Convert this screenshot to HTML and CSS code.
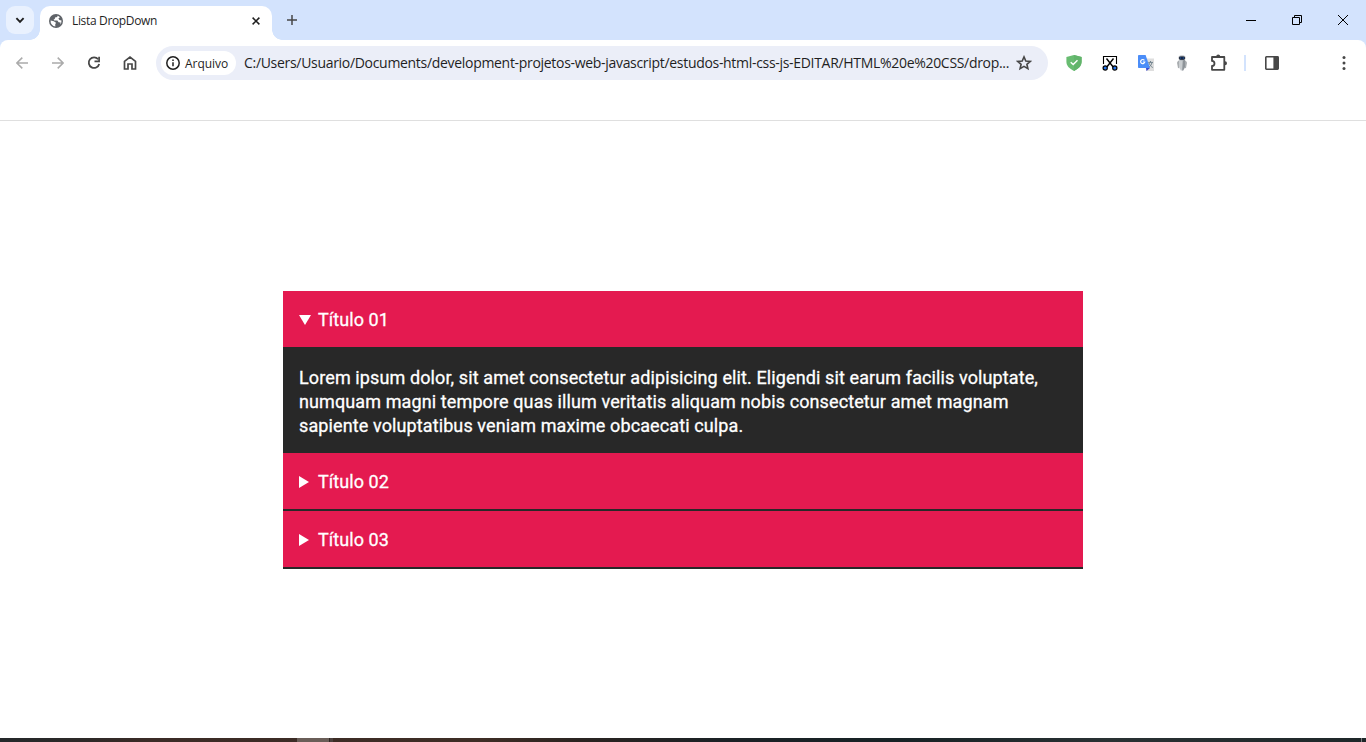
FILE: index.html
```html
<!DOCTYPE html>
<html lang="pt-BR">
<head>
<meta charset="utf-8">
<title>Lista DropDown</title>
<link rel="stylesheet" href="styles.css">
</head>
<body>
<div class="browser">
  <header class="tabstrip">
    <div class="tab-search"><svg width="10" height="10" viewBox="0 0 10 10"><path d="M1.4 3.2 5 6.8 8.6 3.2" fill="none" stroke="#1f1f1f" stroke-width="1.9"/></svg></div>
    <div class="tab">
      <svg class="globe" width="14" height="14" viewBox="0 0 14 14"><circle cx="7" cy="7" r="7" fill="#5f6368"/><path d="M1.6 6.4 4.8 7.2 7 8.8 6.2 10.4 6.4 12.4A5.5 5.5 0 0 1 1.6 6.4ZM8.4 1.7 8.3 3 6 3.6 5.8 5 4.6 5.6 5.2 6.4 8.4 6.5 9.6 8.3 11.6 8.5 11.1 10.6A5.5 5.5 0 0 0 12.5 6.5L10.4 6.1 9.4 4.5 10.9 3.2A5.5 5.5 0 0 0 8.4 1.7Z" fill="#fff"/></svg>
      <span class="tab-title">Lista DropDown</span>
      <svg class="tab-close" width="8" height="8" viewBox="0 0 8 8"><path d="M.6.6 7.4 7.4M7.4.6.6 7.4" stroke="#1f1f1f" stroke-width="1.5"/></svg>
    </div>
    <svg class="new-tab" width="10" height="10" viewBox="0 0 10 10"><path d="M5 0V10M0 5H10" stroke="#474747" stroke-width="1.5"/></svg>
    <div class="window-controls">
      <span><svg width="10" height="10" viewBox="0 0 10 10"><path d="M0 5.5H10" stroke="#000"/></svg></span>
      <span><svg width="10" height="10" viewBox="0 0 10 10"><path d="M.5 2.5H7.5V9.5H.5ZM2.5 2.5V.5H9.5V7.5H7.5" fill="none" stroke="#000"/></svg></span>
      <span><svg width="10" height="10" viewBox="0 0 10 10"><path d="M0 0 10 10M10 0 0 10" stroke="#000"/></svg></span>
    </div>
  </header>
  <div class="toolbar-bg">
  <nav class="toolbar">
    <span class="tool"><svg width="12" height="12" viewBox="0 0 12 12"><path d="M12 6H1M6.3.6.9 6 6.3 11.4" fill="none" stroke="#ababab" stroke-width="1.5"/></svg></span>
    <span class="tool"><svg width="12" height="12" viewBox="0 0 12 12"><path d="M0 6H11M5.7.6 11.1 6 5.7 11.4" fill="none" stroke="#ababab" stroke-width="1.5"/></svg></span>
    <span class="tool"><svg width="14" height="14" viewBox="0 0 14 14"><path d="M11.2 3.3A5.3 5.3 0 1 0 12.2 8" fill="none" stroke="#474747" stroke-width="1.8"/><path d="M12.1.7V5.3H7.5" fill="none" stroke="#474747" stroke-width="1.7"/></svg></span>
    <span class="tool"><svg width="14" height="14" viewBox="0 0 14 14"><path d="M1.5 13V5.3L7 1.1 12.5 5.3V13H9V8H5V13Z" fill="none" stroke="#474747" stroke-width="1.7"/></svg></span>
    <div class="omnibox">
      <div class="chip">
        <svg width="14" height="14" viewBox="0 0 14 14"><circle cx="7" cy="7" r="6.2" fill="none" stroke="#1f1f1f" stroke-width="1.5"/><path d="M7 6.2V10.3M7 3.6V5.1" stroke="#1f1f1f" stroke-width="1.5"/></svg>
        <span class="chip-label">Arquivo</span>
      </div>
      <span class="url">C:/Users/Usuario/Documents/development-projetos-web-javascript/estudos-html-css-js-EDITAR/HTML%20e%20CSS/drop...</span>
      <svg class="star" width="16" height="16" viewBox="0 0 16 16"><path d="M8 1.9 9.8 6 14.2 6.4 10.9 9.3 11.9 13.7 8 11.4 4.1 13.7 5.1 9.3 1.8 6.4 6.2 6Z" fill="none" stroke="#474747" stroke-width="1.6"/></svg>
    </div>
    <div class="extensions">
      <span class="tool"><svg width="16" height="16" viewBox="0 0 16 16"><path d="M8 0 15.6 2V6.5C15.6 10.7 12.8 13.6 8 16 3.2 13.6.4 10.7.4 6.5V2Z" fill="#68bc71"/><path d="M8 0 15.6 2V6.5C15.6 10.7 12.8 13.6 8 16Z" fill="#62b46b"/><path d="M4.7 7.2 7.2 9.6 11.5 5.2" fill="none" stroke="#fff" stroke-width="1.4"/></svg></span>
      <span class="tool"><svg width="16" height="16" viewBox="0 0 16 16"><path d="M1.5 9V1.5H14.5V9" fill="none" stroke="#000" stroke-width="1.1"/><path d="M4.5 3.5 11.2 12M11.5 3.5 4.8 12" stroke="#000" stroke-width="1.4"/><circle cx="3.2" cy="13" r="2.1" fill="#2878ef" stroke="#000" stroke-width="1.2"/><circle cx="12.8" cy="13" r="2.1" fill="#2878ef" stroke="#000" stroke-width="1.2"/></svg></span>
      <span class="tool"><svg width="16" height="16" viewBox="0 0 16 16"><path d="M5 3.5H16V16H8.5Z" fill="#dedede"/><path d="M10.2 7.4H15M12.5 6V7.4M14 7.5C13.5 10 12 11.5 10.5 12.4M11 8C12 10.5 13.3 11.8 14.8 12.5" stroke="#71838e" fill="none"/><path d="M0 .8Q0 0 .8 0H7.6L12 13H.8Q0 13 0 12.2Z" fill="#4b8df8"/><path d="M8 13H12L8.5 16Z" fill="#3a48d0"/><path d="M6.4 5.3A2.1 2.1 0 1 0 6.8 7H4.8" fill="none" stroke="#fff" stroke-width="1.2"/></svg></span>
      <span class="tool"><svg width="16" height="16" viewBox="0 0 16 16"><path d="M4.2 5.5 3 7.8 4 13 5.2 13.2V6ZM11.8 5.5 13 7.8 12 13 10.8 13.2V6Z" fill="#a9adb0"/><path d="M5 5H11V12L9.2 15.5H6.8L5 12Z" fill="#c8cccf"/><path d="M8.8 5H11V12L9.2 15.5H8.2Z" fill="#8e9499"/><rect x="4.4" y=".6" width="7.2" height="4.8" rx="2.4" fill="#a8adb3"/><rect x="5" y="1.4" width="6" height="3.3" rx="1.6" fill="#101a30"/><path d="M6 3H7.4M8.6 3H10" stroke="#2869bd"/></svg></span>
      <span class="tool puzzle"><svg width="18" height="18" viewBox="0 0 18 18"><path d="M2 3H14.3V15.8H2V12C5.3 11.8 5.3 7.1 2 6.9Z" fill="none" stroke="#474747" stroke-width="1.8" stroke-linejoin="round"/><path d="M6.2 2.4A2 2 0 0 1 10.2 2.4ZM15 7.3A2 2 0 0 1 15 11.3Z" fill="#474747"/></svg></span>
      <span class="divider"></span>
      <span class="tool"><svg width="14" height="14" viewBox="0 0 14 14"><rect x=".8" y=".8" width="12.4" height="12.4" rx=".6" fill="none" stroke="#474747" stroke-width="1.6"/><path d="M8.4 1H13V13H8.4Z" fill="#474747"/></svg></span>
      <span class="tool menu"><svg width="4" height="14" viewBox="0 0 4 14"><g fill="#474747"><circle cx="2" cy="1.6" r="1.5"/><circle cx="2" cy="7" r="1.5"/><circle cx="2" cy="12.4" r="1.5"/></g></svg></span>
    </div>
  </nav>
  </div>
  <main class="page">
    <div class="accordion">
      <section class="item">
        <h2 class="summary"><svg class="marker" width="12" height="10" viewBox="0 0 12 10"><path d="M0 0H12L6 10Z" fill="#fff"/></svg>Título 01</h2>
        <p class="content">Lorem ipsum dolor, sit amet consectetur adipisicing elit. Eligendi sit earum facilis voluptate,<br>numquam magni tempore quas illum veritatis aliquam nobis consectetur amet magnam<br>sapiente voluptatibus veniam maxime obcaecati culpa.</p>
      </section>
      <section class="item closed">
        <h2 class="summary"><svg class="marker" width="12" height="12" viewBox="0 0 12 12"><path d="M0 0 10 6 0 12Z" fill="#fff"/></svg>Título 02</h2>
      </section>
      <section class="item closed">
        <h2 class="summary"><svg class="marker" width="12" height="12" viewBox="0 0 12 12"><path d="M0 0 10 6 0 12Z" fill="#fff"/></svg>Título 03</h2>
      </section>
    </div>
  </main>
  <footer class="taskbar"><span class="task-active"></span><span class="task-edge"></span><span class="show-desktop"></span></footer>
</div>
</body>
</html>
```
FILE: styles.css
```css
* { box-sizing: border-box; }
body { margin: 0; background: #fff; overflow: hidden; }
svg { display: block; flex: none; }
.browser { width: 1366px; height: 742px; display: flex; flex-direction: column; }

.tabstrip { height: 40px; flex: none; display: flex; background: #d3e3fd; padding: 6px 0 0 6px; }
.tab-search { width: 28px; height: 28px; border-radius: 9px; background: #e9f1fe; display: flex; align-items: center; justify-content: center; }
.tab { position: relative; width: 232px; height: 34px; margin-left: 6px; padding: 0 12px 5px 9px; border-radius: 10px 10px 0 0; background: #fff; display: flex; align-items: center; }
.tab::before, .tab::after { content: ""; position: absolute; bottom: 0; width: 10px; height: 10px; }
.tab::before { left: -10px; background: radial-gradient(circle at 0 0, transparent 9.5px, #fff 10px); }
.tab::after { right: -10px; background: radial-gradient(circle at 100% 0, transparent 9.5px, #fff 10px); }
.tab-title { margin-left: 9px; font: 12px "Open Sans", sans-serif; letter-spacing: -0.34px; color: #1f1f1f; white-space: nowrap; }
.tab-close { margin-left: auto; }
.new-tab { margin: 9px 0 0 15px; }
.window-controls { margin: -6px 0 0 auto; height: 40px; display: flex; }
.window-controls span { width: 46px; display: flex; align-items: center; justify-content: center; }

.toolbar-bg { flex: none; background: #d3e3fd; }
.toolbar { height: 81px; background: #fff; border-radius: 8px 8px 0 0; border-bottom: 1px solid #dfdfdf; padding: 6px 4px 0; display: flex; align-items: flex-start; }
.tool { width: 36px; height: 34px; flex: none; display: flex; align-items: center; justify-content: center; }
.omnibox { width: 892px; height: 34px; margin-left: 8px; padding: 0 16px 0 5px; border-radius: 17px; background: #ebeef8; display: flex; align-items: center; }
.chip { width: 75px; height: 24px; border-radius: 12px; background: #fff; padding-left: 5px; display: flex; align-items: center; gap: 5px; }
.chip-label { font: 500 12px "Open Sans", sans-serif; letter-spacing: -0.05px; color: #1f1f1f; }
.url { width: 772px; flex: none; margin-left: 8px; padding-bottom: 2px; font: 14px "Open Sans", sans-serif; letter-spacing: -0.307px; color: #1f1f1f; white-space: nowrap; }
.extensions { margin-left: 8px; display: flex; align-items: center; }
.puzzle { padding-left: 2px; }
.divider { width: 2px; height: 16px; margin: 0 8px; background: #d3e3fd; }
.menu { margin-left: 36px; }

.page { flex: 1; padding-top: 170px; }
.accordion { width: 800px; margin: 0 auto; font: 400 18px/24px Roboto, sans-serif; letter-spacing: 0.11px; -webkit-text-stroke: 0.3px #fff; color: #fff; }
.item { background: #282828; }
.closed { border-bottom: 2px solid #282828; }
.summary { height: 56px; margin: 0; padding: 1px 16px 0; background: #e41a50; display: flex; align-items: center; font: inherit; letter-spacing: 0.05px; }
.marker { margin-right: 7px; }
.content { height: 106px; margin: 0; padding: 19px 16px 15px; white-space: nowrap; }

.taskbar { height: 4px; flex: none; padding-left: 297px; display: flex; background: linear-gradient(90deg, #24282a 0, #2c2928 80px, #3b2b26 150px, #3e2d25 480px, #2a2421 580px, #1b2125 720px, #172225 900px, #293133 1110px, #1e2729 1366px); }
.task-active { width: 32px; background: #6a5e58; }
.task-edge { width: 4px; background: #4b403d; border-left: 1px solid #2f2723; }
.show-desktop { width: 5px; margin-left: auto; border-left: 1px solid #7b8182; }
```
